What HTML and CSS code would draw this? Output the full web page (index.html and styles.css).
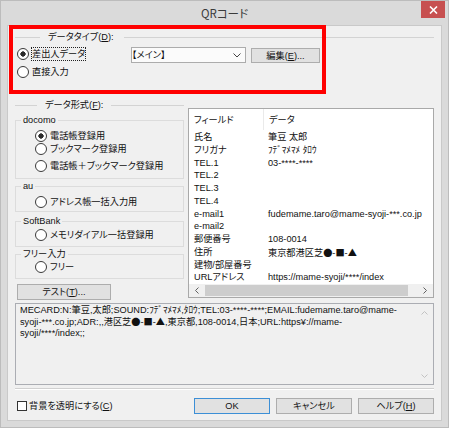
FILE: index.html
```html
<!DOCTYPE html>
<html lang="ja">
<head>
<meta charset="utf-8">
<title>QRコード</title>
<link rel="stylesheet" href="styles.css">
</head>
<body>
<div class="window">
  <div class="titlebar">
    <span class="title">QRコード</span>
    <span class="close"><svg width="9" height="8" viewBox="0 0 9 8"><path d="M1 0.5 L8 7.5 M8 0.5 L1 7.5" stroke="#fff" stroke-width="1.6" fill="none"/></svg></span>
  </div>
  <div class="client">
    <div class="highlight"></div>
    <div class="ghead gh-type"><span>データタイプ(<u>D</u>):</span></div>
    <div class="dt-body">
      <div class="dt-radios">
        <div class="radio checked"><span class="focus">差出人データ</span></div>
        <div class="radio">直接入力</div>
      </div>
      <div class="combo"><span>【メイン】</span><svg width="8" height="5" viewBox="0 0 8 5"><path d="M0.5 0.5 L4 4 L7.5 0.5" stroke="#444" stroke-width="1" fill="none"/></svg></div>
      <div class="btn btn-edit">編集(<u>E</u>)...</div>
    </div>
    <div class="mid">
      <div class="left">
        <div class="ghead gh-fmt"><span>データ形式(<u>F</u>):</span></div>
        <fieldset class="sub sub-docomo">
          <legend>docomo</legend>
          <div class="radio checked">電話帳登録用</div>
          <div class="radio">ブックマーク登録用</div>
          <div class="radio r-last">電話帳＋ブックマーク登録用</div>
        </fieldset>
        <fieldset class="sub sub-au">
          <legend>au</legend>
          <div class="radio">アドレス帳一括入力用</div>
        </fieldset>
        <fieldset class="sub sub-sb">
          <legend>SoftBank</legend>
          <div class="radio">メモリダイアル一括登録用</div>
        </fieldset>
        <fieldset class="sub sub-free">
          <legend>フリー入力</legend>
          <div class="radio">フリー</div>
        </fieldset>
        <div class="btn btn-test">テスト(<u>T</u>)...</div>
      </div>
      <div class="listbox">
        <div class="lb-head">
          <span class="c1">フィールド</span><span class="c2">データ</span>
        </div>
        <div class="lb-rows">
          <div class="row"><span class="c1">氏名</span><span class="c2">筆豆 太郎</span></div>
          <div class="row"><span class="c1">フリガナ</span><span class="c2">ﾌﾃﾞﾏﾒﾏﾒ ﾀﾛｳ</span></div>
          <div class="row"><span class="c1">TEL.1</span><span class="c2">03-****-****</span></div>
          <div class="row"><span class="c1">TEL.2</span><span class="c2"></span></div>
          <div class="row"><span class="c1">TEL.3</span><span class="c2"></span></div>
          <div class="row"><span class="c1">TEL.4</span><span class="c2"></span></div>
          <div class="row"><span class="c1">e-mail1</span><span class="c2">fudemame.taro@mame-syoji-***.co.jp</span></div>
          <div class="row"><span class="c1">e-mail2</span><span class="c2"></span></div>
          <div class="row"><span class="c1">郵便番号</span><span class="c2">108-0014</span></div>
          <div class="row"><span class="c1">住所</span><span class="c2">東京都港区芝<span class="sym">●</span>-<span class="sym">■</span>-<span class="sym">▲</span></span></div>
          <div class="row"><span class="c1">建物/部屋番号</span><span class="c2"></span></div>
          <div class="row"><span class="c1">URLアドレス</span><span class="c2">https://mame-syoji/****/index</span></div>
        </div>
        <div class="hscroll">
          <span class="sb-btn"><svg width="4" height="7" viewBox="0 0 4 7"><path d="M3.5 0.5 L0.5 3.5 L3.5 6.5" stroke="#606060" fill="none"/></svg></span>
          <span class="sb-thumb"></span>
          <span class="sb-track"></span>
          <span class="sb-btn"><svg width="4" height="7" viewBox="0 0 4 7"><path d="M0.5 0.5 L3.5 3.5 L0.5 6.5" stroke="#606060" fill="none"/></svg></span>
        </div>
      </div>
    </div>
    <div class="textarea">
      <div class="ta-text">
        <span class="ln">MECARD:N:筆豆,太郎;SOUND:ﾌﾃﾞﾏﾒﾏﾒ,ﾀﾛｳ;TEL:03-****-****;EMAIL:fudemame.taro@mame-</span>
        <span class="ln">syoji-***.co.jp;ADR:,,港区芝<span class="sym">●</span>-<span class="sym">■</span>-<span class="sym">▲</span>,東京都,108-0014,日本;URL:https¥://mame-</span>
        <span class="ln">syoji/****/index;;</span>
      </div>
      <div class="vscroll">
        <svg width="7" height="4" viewBox="0 0 7 4"><path d="M0.5 3.5 L3.5 0.5 L6.5 3.5" stroke="#c2c2c2" fill="none"/></svg>
        <svg width="7" height="4" viewBox="0 0 7 4"><path d="M0.5 0.5 L3.5 3.5 L6.5 0.5" stroke="#c2c2c2" fill="none"/></svg>
      </div>
    </div>
    <div class="sep"></div>
    <div class="footer">
      <div class="check"><span class="box"></span>背景を透明にする(<u>C</u>)</div>
      <div class="btn btn-ok">OK</div>
      <div class="btn btn-foot">キャンセル</div>
      <div class="btn btn-foot">ヘルプ(<u>H</u>)</div>
    </div>
  </div>
</div>
</body>
</html>
```

FILE: styles.css
```css
* { box-sizing: border-box; }
html, body { margin: 0; background: #ffffff; }
body {
  font-family: "Liberation Sans", "Noto Sans CJK JP", sans-serif;
  font-size: 9.2px;
  line-height: 12px;
  font-feature-settings: "palt";
  color: #111;
}
u { text-decoration: underline; text-underline-offset: 1px; }
.sym { font-family: "Noto Sans CJK JP", sans-serif; font-feature-settings: normal; }

.window {
  width: 449px;
  height: 428px;
  background: #dadada;
  border: 1px solid #bcbcbc;
  display: flex;
  flex-direction: column;
}
.titlebar {
  height: 24px;
  display: grid;
  grid-template-columns: 1fr auto 1fr;
  align-items: start;
}
.title {
  grid-column: 2;
  font-family: "Noto Sans CJK JP", sans-serif;
  font-size: 11.5px;
  line-height: 25px;
  color: #3a3a3a;
}
.close {
  grid-column: 3;
  justify-self: end;
  margin-right: 3px;
  width: 24px;
  height: 17px;
  background: #c75050;
  display: flex;
  align-items: center;
  justify-content: center;
}

.client {
  flex: 1;
  margin: 0 6px 6px;
  background: #f0f0f0;
  border: 1px solid #c9c9c9;
  padding: 5px 7px 0 7px;
  display: flex;
  flex-direction: column;
  position: relative;
}
.highlight {
  position: absolute;
  left: 1px;
  top: -1px;
  width: 317px;
  height: 69px;
  border: 4px solid #ff0000;
  pointer-events: none;
}

.ghead {
  display: flex;
  align-items: center;
  height: 12px;
}
.ghead::before, .ghead::after {
  content: "";
  border-top: 1px solid #d3d3d3;
}
.ghead::after { flex: 1; }
.gh-type::before { width: 25px; }
.gh-type span { padding: 0 10px 0 8px; }
.gh-fmt::before { width: 22px; }
.gh-fmt span { padding: 0 8px 0 8px; }

.dt-body {
  display: flex;
  align-items: flex-start;
  margin-top: 3px;
}
.dt-radios {
  width: 116px;
  display: flex;
  flex-direction: column;
  gap: 2px;
}
.dt-radios .radio { height: 16px; padding-left: 2px; }

.radio {
  display: flex;
  align-items: center;
  height: 13px;
  white-space: nowrap;
}
.radio::before {
  content: "";
  width: 10px;
  height: 10px;
  flex: none;
  border: 1px solid #3a3a3a;
  border-radius: 50%;
  background: #fff;
  margin-right: 3px;
}
.radio.checked::before {
  background: radial-gradient(circle, #2a2a2a 0 2.4px, #fff 2.9px);
}
.focus { outline: 1px dotted #222; outline-offset: 0; }

.combo {
  width: 115px;
  height: 16px;
  margin-top: 1px;
  border: 1px solid #acacac;
  background: #fbfbfb;
  display: flex;
  align-items: center;
  justify-content: space-between;
  padding: 0 4px 0 0;
}
.btn {
  background: #e1e1e1;
  border: 1px solid #adadad;
  display: flex;
  align-items: center;
  justify-content: center;
  white-space: nowrap;
}
.btn-edit {
  width: 69px;
  height: 15px;
  margin: 2px 0 0 5px;
}

.mid {
  display: flex;
  gap: 4px;
  margin-top: 19px;
}
.left {
  width: 169px;
  display: flex;
  flex-direction: column;
}
.sub {
  margin: 0;
  padding: 0;
  border: 1px solid #dcdcdc;
  min-width: 0;
}
.sub legend {
  padding: 0 2px;
  margin-left: 5px;
  line-height: 12px;
}
.sub .radio { height: 13px; margin-left: 19px; }
.sub-docomo { margin-top: 3px; padding-top: 3px; padding-bottom: 6px; }
.sub-docomo .r-last { margin-top: 4px; }
.sub-au { margin-top: 1px; padding-top: 3px; padding-bottom: 3px; }
.sub-sb { margin-top: 3px; padding-top: 1px; padding-bottom: 5px; }
.sub-free { margin-top: 1px; padding-top: 0; padding-bottom: 5px; }
.btn-test {
  width: 94px;
  height: 16px;
  margin: 5px 0 0 2px;
}

.listbox {
  width: 246px;
  height: 190px;
  margin-top: 9px;
  background: #fff;
  border: 1px solid #a9a9a9;
  display: flex;
  flex-direction: column;
}
.lb-head {
  height: 21px;
  display: flex;
  align-items: center;
  flex: none;
}
.lb-head .c2 { border-left: 1px solid #eaeaea; align-self: stretch; display: flex; align-items: center; }
.c1 { width: 74px; padding-left: 5px; flex: none; white-space: nowrap; }
.c2 { padding-left: 5px; white-space: nowrap; }
.lb-rows {
  flex: 1;
  overflow: hidden;
  padding-top: 1px;
}
.row {
  display: flex;
  height: 12.75px;
  line-height: 12.75px;
}
.hscroll {
  height: 13px;
  flex: none;
  display: flex;
  background: #f0f0f0;
}
.sb-btn {
  width: 16px;
  display: flex;
  align-items: center;
  justify-content: center;
}
.sb-thumb { width: 203px; background: #cdcdcd; margin: 1px 0; }
.sb-track { flex: 1; }

.textarea {
  height: 82px;
  margin-top: 3px;
  border: 1px solid #abadb3;
  background: #f0f0f0;
  display: flex;
}
.ta-text {
  flex: 1;
  padding: 1px 0 0 4px;
  line-height: 11px;
  display: flex;
  flex-direction: column;
}
.ln { white-space: nowrap; }
.vscroll {
  width: 17px;
  display: flex;
  flex-direction: column;
  justify-content: space-between;
  align-items: center;
  padding: 7px 0 6px;
}

.sep {
  margin-top: 3px;
  border-top: 1px solid #d0d0d0;
  border-bottom: 1px solid #ffffff;
}
.footer {
  display: flex;
  align-items: center;
  gap: 6px;
  margin-top: 8px;
}
.check {
  flex: 1;
  display: flex;
  align-items: center;
  padding-left: 2px;
}
.box {
  width: 10px;
  height: 10px;
  border: 1px solid #333;
  background: #fff;
  margin-right: 2px;
}
.btn-ok, .btn-foot { width: 76px; height: 16px; }
.btn-ok { border-color: #3c8fd6; }
```
